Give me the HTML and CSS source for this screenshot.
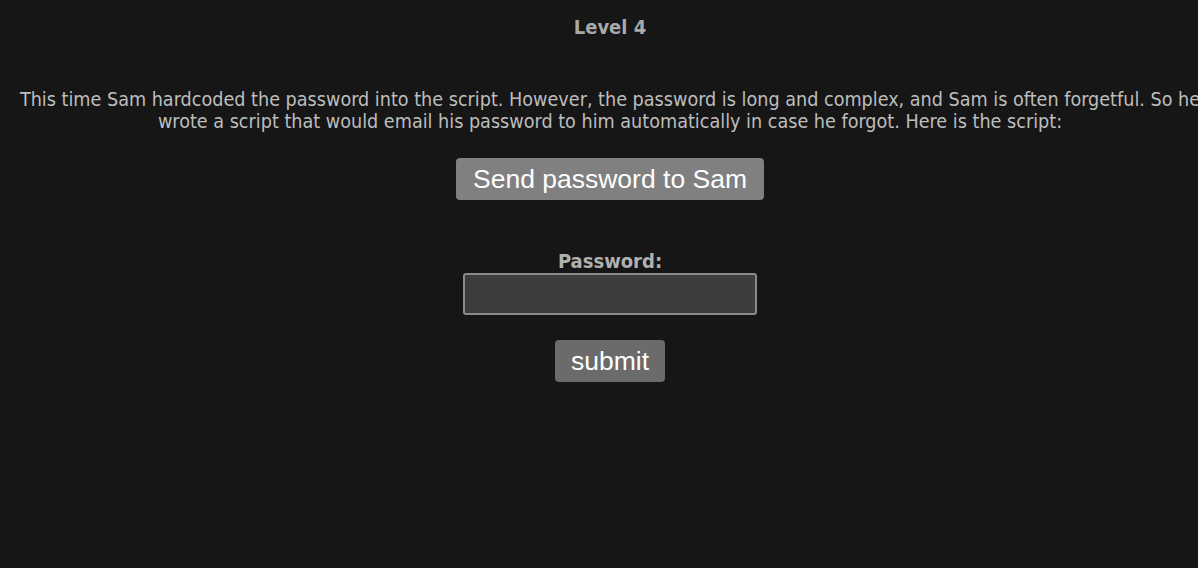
FILE: index.html
```html
<!DOCTYPE html>
<html>
<head>
<meta charset="utf-8">
<link rel="stylesheet" href="styles.css">
</head>
<body>
<main class="page">
  <h1 class="title">Level 4</h1>
  <p class="intro">This time Sam hardcoded the password into the script. However, the password is long and complex, and Sam is often forgetful. So he wrote a script that would email his password to him automatically in case he forgot. Here is the script:</p>
  <button class="btn btn-send" type="button">Send password to Sam</button>
  <form class="login">
    <label class="label" for="pw">Password:</label>
    <input class="field" id="pw" type="password">
    <button class="btn btn-submit" type="button">submit</button>
  </form>
</main>
</body>
</html>
```
FILE: styles.css
```css
html, body {
  background: #161616;
}
body {
  margin: 0;
  overflow: hidden;
}
.page {
  width: 1204px;
  margin-left: 8px;
  display: flex;
  flex-direction: column;
  align-items: center;
  text-align: center;
  font-family: "DejaVu Sans Condensed", "DejaVu Sans", sans-serif;
  color: #bdbdbd;
}
.title {
  margin: 16px 0 0;
  font-size: 20px;
  line-height: 22px;
  font-weight: bold;
  color: #a9a9a9;
}
.intro {
  margin: 51px 0 0;
  font-size: 19.6px;
  line-height: 22px;
  white-space: normal;
}
.btn {
  font-family: "Liberation Sans", Arial, sans-serif;
  font-size: 26.5px;
  color: #ffffff;
  border: none;
  border-radius: 4px;
  height: 42px;
  padding: 0 12px;
}
.btn-send {
  margin-top: 25px;
  background: #808080;
  width: 308px;
}
.login {
  margin-top: 50px;
  display: flex;
  flex-direction: column;
  align-items: center;
}
.label {
  font-size: 20px;
  line-height: 22px;
  font-weight: bold;
  color: #b0b0b0;
  height: 23px;
}
.field {
  box-sizing: border-box;
  width: 294px;
  height: 42px;
  background: #3d3d3d;
  border: 2px solid #8a8a8a;
  border-radius: 3px;
  margin: 0;
}
.btn-submit {
  margin-top: 25px;
  background: #6b6b6b;
  width: 110px;
}
```
